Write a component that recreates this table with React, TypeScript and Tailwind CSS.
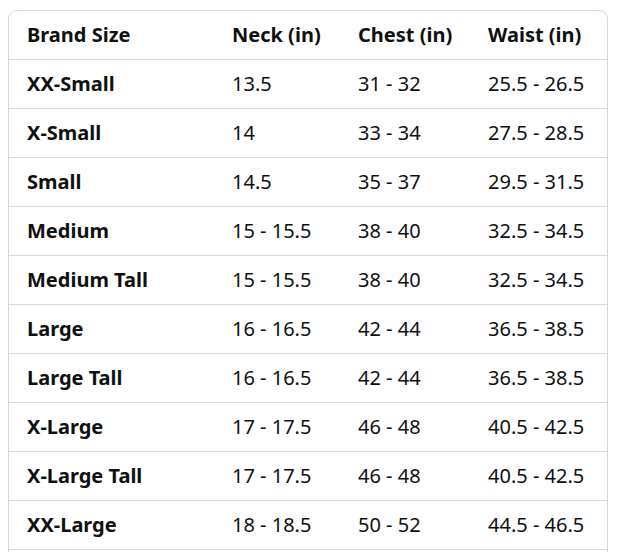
const rows: [string, string, string, string][] = [
  ['XX-Small', '13.5', '31 - 32', '25.5 - 26.5'],
  ['X-Small', '14', '33 - 34', '27.5 - 28.5'],
  ['Small', '14.5', '35 - 37', '29.5 - 31.5'],
  ['Medium', '15 - 15.5', '38 - 40', '32.5 - 34.5'],
  ['Medium Tall', '15 - 15.5', '38 - 40', '32.5 - 34.5'],
  ['Large', '16 - 16.5', '42 - 44', '36.5 - 38.5'],
  ['Large Tall', '16 - 16.5', '42 - 44', '36.5 - 38.5'],
  ['X-Large', '17 - 17.5', '46 - 48', '40.5 - 42.5'],
  ['X-Large Tall', '17 - 17.5', '46 - 48', '40.5 - 42.5'],
  ['XX-Large', '18 - 18.5', '50 - 52', '44.5 - 46.5'],
];

const headers = ['Brand Size', 'Neck (in)', 'Chest (in)', 'Waist (in)'];

export default function App() {
  return (
    <div className="h-[552px] overflow-hidden bg-white pl-2 pt-[10px] font-['Noto_Sans',sans-serif] text-[20px] text-[#0f1111]">
      {/* table runs on past the bottom of the frame, so no bottom border */}
      <div className="h-[560px] w-[600px] rounded-t-[9px] border border-b-0 border-[#d5d9d9]">
        <table className="w-full table-fixed border-separate border-spacing-0">
          <colgroup>
            <col className="w-[205px]" />
            <col className="w-[125px]" />
            <col className="w-[130px]" />
            <col />
          </colgroup>
          <thead>
            <tr>
              {headers.map((h, i) => (
                <th
                  key={h}
                  className={`h-[49px] border-b border-[#d5d9d9] pl-[18px] text-left font-bold ${i >= 2 ? 'border-l border-l-white' : ''}`}
                >
                  {h}
                </th>
              ))}
            </tr>
          </thead>
          <tbody>
            {rows.map((r) => (
              <tr key={r[0]}>
                {r.map((c, i) => (
                  <td
                    key={i}
                    className={`h-[49px] border-b border-[#d5d9d9] pl-[18px] ${i === 0 ? 'font-bold' : ''} ${i >= 2 ? 'border-l border-l-white' : ''}`}
                  >
                    {c}
                  </td>
                ))}
              </tr>
            ))}
          </tbody>
        </table>
      </div>
    </div>
  );
}
